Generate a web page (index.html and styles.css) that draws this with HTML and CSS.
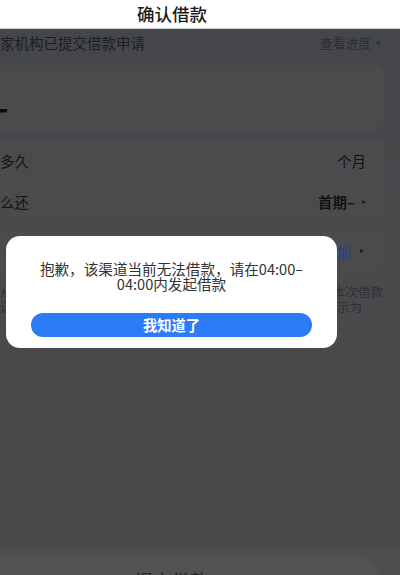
FILE: index.html
```html
<!DOCTYPE html>
<html lang="zh-CN">
<head>
<meta charset="utf-8">
<title>确认借款</title>
<link rel="stylesheet" href="styles.css">
</head>
<body>
<div class="app">
  <header class="nav"><h1 class="nav-title">确认借款</h1></header>
  <main class="content">
    <div class="notice">
      <span class="notice-text">家机构已提交借款申请</span>
      <a class="notice-link">查看进度<i class="caret"></i></a>
    </div>
    <section class="card card-amount"><span class="amount">—</span></section>
    <section class="card card-list">
      <div class="row"><span class="label">多久</span><span class="value">个月</span></div>
      <div class="row"><span class="label">么还</span><span class="value value-bold">首期–<i class="caret caret-dark caret-gap"></i></span></div>
    </section>
    <section class="card card-coupon">
      <div class="row row-end"><span class="value value-link">添加<i class="caret caret-dark caret-wide"></i></span></div>
    </section>
    <div class="tip">
      <p class="tip-line"><span>从</span><span>本次借款</span></p>
      <p class="tip-line tip-line-short"><span>证</span><span>示为</span></p>
    </div>
  </main>
  <footer class="bottom-bar"><button class="submit">提交借款</button></footer>
</div>
<div class="modal">
  <p class="modal-text">抱歉，该渠道当前无法借款，请在04:00–<br>04:00内发起借款</p>
  <button class="modal-btn">我知道了</button>
</div>
</body>
</html>
```
FILE: styles.css
```css
* { box-sizing: border-box; margin: 0; padding: 0; }
html, body { width: 400px; height: 575px; overflow: hidden; }
body {
  font-family: "Noto Sans CJK SC", "Noto Sans", sans-serif;
  background: #4a4a4c;
  color: #111;
}
.app { display: flex; flex-direction: column; width: 400px; }

.nav {
  flex: none;
  height: 29px;
  background: #fff;
  border-bottom: 1px solid #c9cacd;
}
.nav-title {
  font-size: 17.5px;
  font-weight: 500;
  line-height: 27px;
  padding-left: 137px;
  color: #1b1b1b;
}

.content {
  flex: none;
  height: 518px;
  background: linear-gradient(#44464a 0, #48494b 170px, #4a4a4c 320px);
}

.notice {
  display: flex;
  justify-content: space-between;
  align-items: center;
  height: 28px;
  padding-right: 19px;
}
.notice-text { font-size: 14.5px; color: #1d1e21; line-height: 1; }
.notice-link {
  display: flex;
  align-items: center;
  font-size: 12.75px;
  color: #2c2d31;
  line-height: 1;
}
.caret {
  display: inline-block;
  width: 0;
  height: 0;
  margin-left: 6px;
  border-left: 4px solid #2c2d31;
  border-top: 2.5px solid transparent;
  border-bottom: 2.5px solid transparent;
}
.caret-dark { border-left-color: #1e1e20; }
.caret-gap { margin-left: 7px; }
.caret-wide { margin-left: 9px; }

.card {
  margin: 8px 16px 0 -24px;
  background: #4b4b4d;
  border-radius: 8px;
}
.card-amount {
  height: 65px;
  padding-top: 22px;
}
.amount {
  display: block;
  font-size: 36px;
  font-weight: 700;
  line-height: 36px;
  color: #0c0c0c;
}
.card-list {
  margin-top: 10px;
  padding: 0 18px 0 24px;
}
.row {
  display: flex;
  justify-content: space-between;
  align-items: center;
  height: 41px;
  font-size: 14.5px;
}
.label { color: #141416; }
.value { display: flex; align-items: center; color: #121214; }
.value-bold { font-weight: 700; }
.card-coupon {
  height: 42px;
  padding-right: 20px;
}
.row-end { justify-content: flex-end; height: 42px; }
.value-link { color: #244684; font-weight: 500; }

.tip {
  margin: 12px 17px 0 0;
  font-size: 12.5px;
  line-height: 15px;
  color: #2f3034;
}
.tip-line { display: flex; justify-content: space-between; }
.tip-line-short { padding-right: 21px; }

.bottom-bar {
  flex: none;
  background: #4e4e50;
  padding: 9px 0 20px;
}
.submit {
  display: block;
  width: 417px;
  height: 48px;
  margin-left: -37px;
  border: none;
  border-radius: 24px;
  background: #525254;
  color: #232325;
  font-family: inherit;
  font-size: 18.5px;
  line-height: 48px;
}

.modal {
  position: fixed;
  left: 6px;
  top: 236px;
  width: 331px;
  background: #fff;
  border-radius: 14px;
  padding: 25px 25px 11px;
  text-align: center;
}
.modal-text {
  font-size: 14.6px;
  line-height: 15px;
  color: #333;
}
.modal-btn {
  display: block;
  width: 281px;
  height: 24px;
  margin-top: 22px;
  border: none;
  border-radius: 12px;
  background: #2b7bf6;
  color: #fff;
  font-family: inherit;
  font-size: 14.3px;
  font-weight: 700;
  line-height: 24px;
}
```
